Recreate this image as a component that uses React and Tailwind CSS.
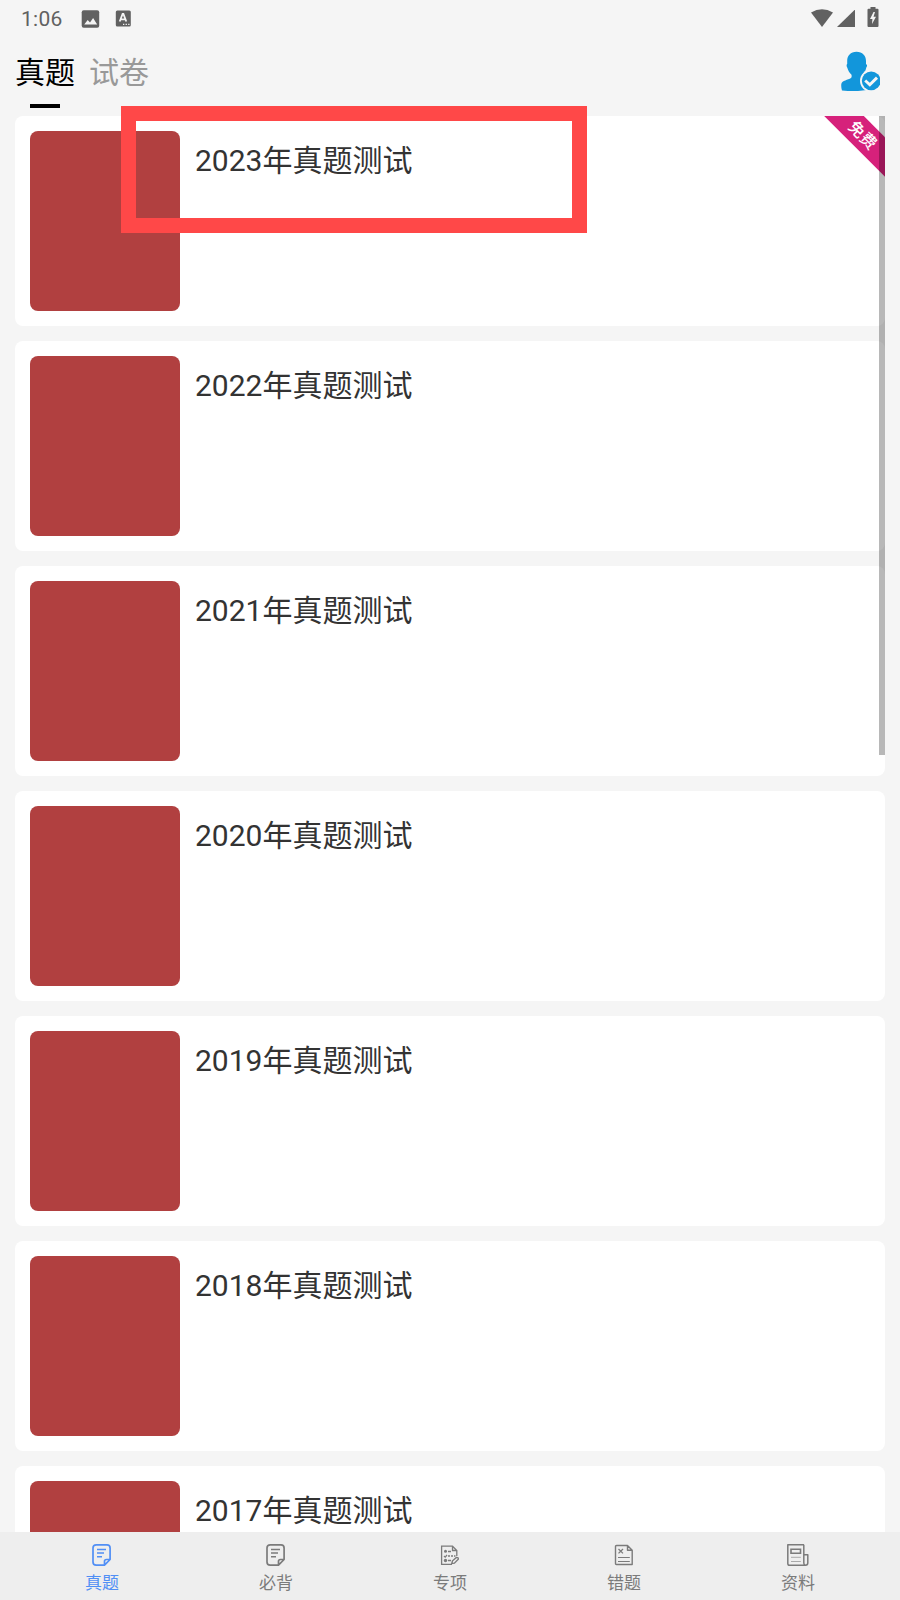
const papers = [2023, 2022, 2021, 2020, 2019, 2018, 2017]

function NoteIcon() {
  return (
    <svg className="w-6 h-6" viewBox="0 0 24 24" fill="none" stroke="currentColor">
      <path strokeWidth="1.7" strokeLinejoin="round" d="M14.5 22.1H6.2Q3 22.1 3 18.9V4.9Q3 1.9 6.2 1.9H17Q20.1 1.9 20.1 4.9V16.5L14.5 22.1V18.3Q14.5 16.5 16.5 16.5H20.1" />
      <path strokeWidth="1.5" d="M7 6.5H16M7 10H14M7 13.7H12" />
    </svg>
  )
}

function ChecklistIcon() {
  return (
    <svg className="w-6 h-6" viewBox="0 0 24 24" fill="none" stroke="currentColor">
      <path strokeWidth="1.3" d="M14 21.3H3.6V3.2H14.5L18.8 7.5V13M14.5 3V7.5H18.8" />
      <path strokeWidth="1.4" d="M10 8.5H13M10 13H12M13 13H15M16 13H17.5M10 17.5H13" />
      <path strokeWidth="1.2" d="M6 13L7.2 14.2L9 12" />
      <circle cx="7.5" cy="8.3" r="1.5" fill="currentColor" stroke="none" />
      <circle cx="7.5" cy="17.5" r="1.7" fill="currentColor" stroke="none" />
      <path strokeWidth="1.4" d="M13.8 20.5L14.5 17.8L18.4 14.4Q20.5 14.3 20.3 16.3L16.4 20.2Z" />
    </svg>
  )
}

function WrongIcon() {
  return (
    <svg className="w-6 h-6" viewBox="0 0 24 24" fill="none" stroke="currentColor">
      <path strokeWidth="1.4" strokeLinejoin="round" d="M4.5 2.5H15.5L20.2 7.3V21.5H4.5Q3.5 21.5 3.5 20.5V3.5Q3.5 2.5 4.5 2.5ZM15.5 2.5V7.3H20.2V20.5" />
      <path strokeWidth="1.3" d="M6.5 6L11 10.4M11 6L6.5 10.4" />
      <path strokeWidth="1.2" d="M6 14.5H17.8M6 18.5H17.8" />
    </svg>
  )
}

function NewsIcon() {
  return (
    <svg className="w-6 h-6" viewBox="0 0 24 24" fill="none" stroke="currentColor">
      <path strokeWidth="1.5" strokeLinejoin="round" d="M18 1.7H1.8V20.4Q1.8 22.2 3.6 22.2H19.5Q17.8 22 17.8 20V1.7M17.8 11.8H21.8V20Q21.8 22.2 19.5 22.2" />
      <path strokeWidth="1.6" d="M5 6.3H14.5V10.3H5Z" />
      <path strokeWidth="1" opacity="0.6" d="M5 14.3H14.8M5 18.5H14.8" />
    </svg>
  )
}

const tabs = [
  { label: '真题', icon: NoteIcon, active: true },
  { label: '必背', icon: NoteIcon },
  { label: '专项', icon: ChecklistIcon },
  { label: '错题', icon: WrongIcon },
  { label: '资料', icon: NewsIcon },
]

function StatusBar() {
  return (
    <div className="h-9 pt-px pl-[21px] pr-[21px] flex items-center text-[#616161]">
      <span className="w-[60px] text-[21px] leading-none font-[450] tracking-[0.3px] pt-px">1:06</span>
      <svg className="w-[19px] h-[18px] mt-px" viewBox="0 0 19 18">
        <rect x="0.7" y="0.2" width="17.5" height="17.5" rx="2" fill="currentColor" />
        <path d="M3.2 14.5L6.7 10L9 12.6L12.1 8L16.2 14.5Z" fill="#f5f5f5" />
      </svg>
      <svg className="w-4 h-[17px] ml-[15px]" viewBox="0 0 16 17">
        <rect x="0.8" y="0.5" width="15" height="16" rx="1.5" fill="currentColor" />
        <path d="M4.7 11.5L7.6 4H8.4L11.3 11.5M5.7 9.3H10.3" fill="none" stroke="#f5f5f5" strokeWidth="1.8" />
        <path d="M8 14.3H9.3M10.6 14.3H11.9M13.2 14.3H14.5" stroke="#f5f5f5" strokeWidth="1.3" />
      </svg>
      <svg className="w-[23px] h-5 ml-auto" viewBox="0 0 23 20">
        <path d="M0 3.5Q11 -3.2 22 3.5L11 18Z" fill="currentColor" />
      </svg>
      <svg className="w-[18px] h-[18px] ml-[3px]" viewBox="0 0 18 18">
        <path d="M0 17L18 -0.5V17Z" fill="currentColor" />
      </svg>
      <svg className="w-3 h-5 ml-3 -mt-[3px]" viewBox="0 0 12 20">
        <path d="M3.5 0H8.5V1.8H10.5Q11.5 1.8 11.5 2.8V19Q11.5 20 10.5 20H1.5Q0.5 20 0.5 19V2.8Q0.5 1.8 1.5 1.8H3.5Z" fill="currentColor" />
        <path d="M6.5 5L3 12H5.4L5 17L9 9.8H6.5L8 5Z" fill="#f5f5f5" />
      </svg>
    </div>
  )
}

function Header() {
  return (
    <header className="h-20 px-[15px] flex items-start justify-between">
      <div className="flex gap-3.5 text-[30px] leading-[44px] pt-[15px]">
        <div className="flex flex-col items-center text-black">
          <span>真题</span>
          <span className="w-[30px] h-1 mt-[9px] bg-black" />
        </div>
        <span className="text-[#999999]">试卷</span>
      </div>
      <svg className="w-10 h-10 mt-[15px] mr-[5px]" viewBox="0 0 40 40">
        <path d="M16.5 0.8C22.5 0.8 26 4.8 26 10V13Q28 14 26.3 16.5C25.6 20 24 22.5 22 24Q21.7 26.5 23.5 28L27 39Q15 41 2 39.5Q1 37 1.3 33C2 29.5 8 29 11 27Q12 26 11.5 23.8C9 21.5 8 19 7.2 16.5Q6 14 7.2 13V10C7.2 4.8 10.5 0.8 16.5 0.8Z" fill="#1296db" />
        <circle cx="31.2" cy="29.8" r="11.2" fill="#f5f5f5" />
        <circle cx="31.2" cy="29.8" r="9.4" fill="#1296db" />
        <path d="M25.2 29.5L29.8 33.8L37 26.6" fill="none" stroke="#f5f5f5" strokeWidth="2.9" />
      </svg>
    </header>
  )
}

function PaperCard({ year, free }) {
  return (
    <li className="relative h-[210px] shrink-0 flex gap-[15px] p-[15px] bg-white rounded-lg overflow-hidden">
      <div className="w-[150px] h-[180px] bg-[#b14040] rounded-lg" />
      <h2 className="text-[30px] leading-[44px] mt-2 text-[#333333]">{year}年真题测试</h2>
      {free && (
        <span className="absolute -right-[33.5px] top-[5.5px] w-[110px] h-[28px] rotate-45 bg-[#d6217b] text-white text-[16px] font-medium leading-[30px] text-center pr-[3px]">
          免费
        </span>
      )}
    </li>
  )
}

export default function App() {
  return (
    <div className="relative w-[900px] h-[1600px] flex flex-col overflow-hidden bg-[#f5f5f5] font-[Roboto,'Noto_Sans_CJK_SC',sans-serif]">
      <StatusBar />
      <Header />
      <main className="relative flex-1 min-h-0 mx-[15px] overflow-hidden">
        <ul className="flex flex-col gap-[15px]">
          {papers.map((year) => (
            <PaperCard key={year} year={year} free={year === 2023} />
          ))}
        </ul>
        <div className="absolute right-0 top-0 w-1.5 h-[639px] bg-black/28" />
      </main>
      <div className="absolute left-[121px] top-[106px] w-[466px] h-[127px] border-[15px] border-[#ff4848]" />
      <nav className="h-[68px] px-[15px] grid grid-cols-5 bg-[#eeeeee]">
        {tabs.map(({ label, icon: Icon, active }) => (
          <div key={label} className={active ? 'flex flex-col items-center pt-[11px] text-[#518ff5]' : 'flex flex-col items-center pt-[11px] text-[#7b7b7b]'}>
            <Icon />
            <span className="text-[17px] leading-6 mt-1">{label}</span>
          </div>
        ))}
      </nav>
    </div>
  )
}
